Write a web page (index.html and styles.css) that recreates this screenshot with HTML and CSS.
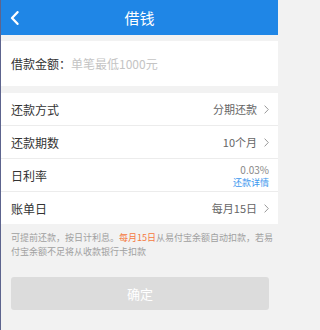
FILE: index.html
```html
<!DOCTYPE html>
<html lang="zh-CN">
<head>
<meta charset="utf-8">
<title>借钱</title>
<link rel="stylesheet" href="styles.css">
</head>
<body>
<div class="page">
  <header class="topbar">
    <span class="back">
      <svg width="9" height="14" viewBox="0 0 9 14"><polyline points="7.5,1.2 2,7 7.5,12.8" fill="none" stroke="#fff" stroke-width="2.3" stroke-linecap="round" stroke-linejoin="round"/></svg>
    </span>
    <h1 class="title">借钱</h1>
    <span></span>
  </header>

  <div class="amount">
    <span class="label">借款金额：</span><span class="placeholder">单笔最低1000元</span>
  </div>

  <ul class="list">
    <li class="row">
      <span class="label">还款方式</span>
      <span class="value">分期还款<svg class="chev" width="5" height="9" viewBox="0 0 5 9"><polyline points="0.6,0.6 4.3,4.5 0.6,8.4" fill="none" stroke="#999" stroke-width="1"/></svg></span>
    </li>
    <li class="row">
      <span class="label">还款期数</span>
      <span class="value">10个月<svg class="chev" width="5" height="9" viewBox="0 0 5 9"><polyline points="0.6,0.6 4.3,4.5 0.6,8.4" fill="none" stroke="#999" stroke-width="1"/></svg></span>
    </li>
    <li class="row">
      <span class="label">日利率</span>
      <span class="rate"><span class="pct">0.03%</span><span class="link">还款详情</span></span>
    </li>
    <li class="row">
      <span class="label">账单日</span>
      <span class="value">每月15日<svg class="chev" width="5" height="9" viewBox="0 0 5 9"><polyline points="0.6,0.6 4.3,4.5 0.6,8.4" fill="none" stroke="#999" stroke-width="1"/></svg></span>
    </li>
  </ul>

  <p class="note">可提前还款，按日计利息。<span class="hl">每月15日</span>从易付宝余额自动扣款，若易<br>付宝余额不足将从收款银行卡扣款</p>

  <div class="actions">
    <button class="btn" type="button">确定</button>
  </div>
</div>
</body>
</html>
```

FILE: styles.css
```css
* { box-sizing: border-box; }
html, body {
  margin: 0;
  padding: 0;
  background: #f2f2f2;
  font-family: "Noto Sans CJK SC", "Noto Sans", sans-serif;
}
.page {
  width: 278px;
  min-height: 330px;
  border-left: 1px solid rgba(30, 40, 100, 0.7);
  background: #f2f2f2;
}
.topbar {
  height: 35px;
  background: #1f86e6;
  display: grid;
  grid-template-columns: 1fr auto 1fr;
  align-items: center;
}
.back {
  display: flex;
  align-items: center;
  padding-left: 9px;
  height: 35px;
}
.back svg { display: block; }
.title {
  margin: 0;
  font-size: 15px;
  font-weight: 400;
  color: #fff;
  line-height: 35px;
}
.amount {
  margin-top: 6px;
  height: 45px;
  background: #fff;
  display: flex;
  align-items: center;
  padding-left: 10px;
  font-size: 12px;
}
.label { color: #333; font-size: 12px; }
.placeholder { color: #c4c4c4; }
.list {
  list-style: none;
  margin: 7px 0 0;
  padding: 0;
  background: #fff;
}
.row {
  height: 33px;
  border-bottom: 1px solid #ececec;
  display: flex;
  justify-content: space-between;
  align-items: center;
  padding: 0 9px 0 10px;
}
.row:last-child { border-bottom: none; height: 32px; }
.value {
  display: flex;
  align-items: center;
  font-size: 11px;
  color: #666;
}
.chev { display: block; margin-left: 7px; }
.rate {
  display: flex;
  flex-direction: column;
  align-items: flex-end;
  line-height: 13px;
  padding-top: 1px;
}
.pct { font-size: 10px; color: #888; }
.link { font-size: 9px; color: #3d97ee; }
.note {
  margin: 0;
  padding: 7px 8px 0 10px;
  font-size: 9px;
  line-height: 14px;
  color: #a0a0a0;
  white-space: nowrap;
}
.hl { color: #f5793f; }
.actions {
  padding: 18px 8px 0 10px;
}
.btn {
  width: 258px;
  height: 33px;
  border: none;
  border-radius: 3px;
  background: #dcdcdc;
  color: #fff;
  font-family: inherit;
  font-size: 13px;
  padding: 0;
}
```
